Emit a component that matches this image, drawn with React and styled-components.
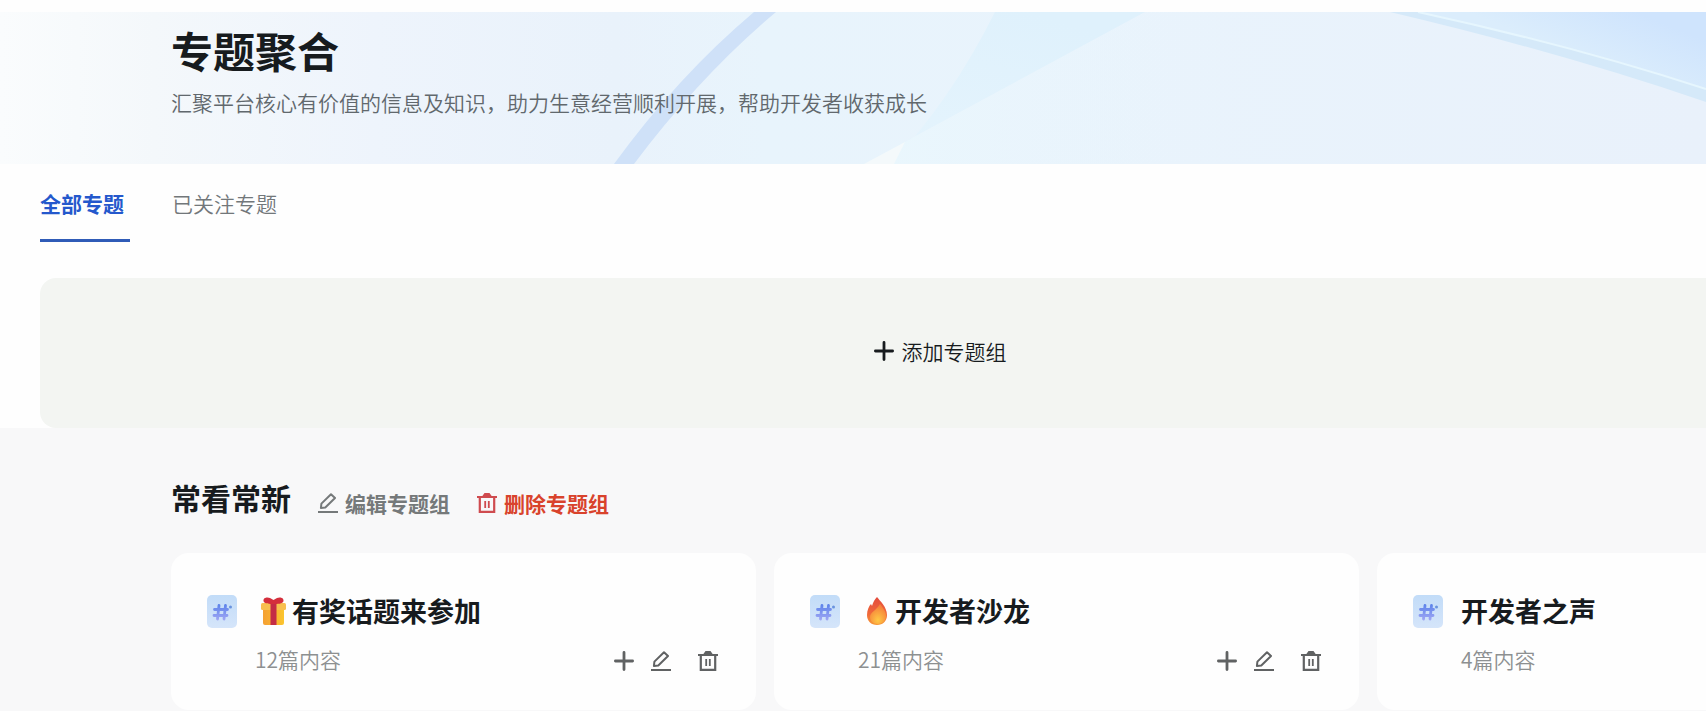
import React from 'react'
import styled, { createGlobalStyle } from 'styled-components';

const GlobalStyle = createGlobalStyle`
    * {
        box-sizing: border-box;
    }

    body {
        margin: 0;
        overflow: hidden;
        background-color: #fefefe;
        color: #171b1e;
        font-family: "Noto Sans CJK SC", "Noto Sans", sans-serif;
        font-size: 21px;
        font-weight: 350;
        line-height: 32px;
    }

    h1, h2, h3, p {
        margin: 0;
    }

    button {
        padding: 0;
        border: 0;
        background: none;
        color: inherit;
        font: inherit;
        cursor: pointer;
    }

    svg {
        display: block;
        flex-shrink: 0;
    }
`

const Page = styled.div`
    display: flex;
    flex-direction: column;
    min-height: 100vh;
    overflow: hidden;
    padding-top: 12px;
`

const Banner = styled.header`
    display: grid;
    height: 152px;

    > * {
        grid-area: 1 / 1;
    }
`

const BannerText = styled.div`
    z-index: 1;
    padding: 8px 0 0 171px;

    h1 {
        font-size: 42px;
        font-weight: 700;
        line-height: 60px;
    }

    p {
        margin-top: 6px;
        color: #61686d;
    }
`

const Tabs = styled.nav`
    display: flex;
    gap: 42px;
    padding: 23px 40px 0;
`

const Tab = styled.a`
    width: ${({ $active }) => $active ? '90px' : 'auto'};
    height: 55px;
    border-bottom: 3px solid ${({ $active }) => $active ? '#2f5bb7' : 'transparent'};
    color: ${({ $active }) => $active ? '#2458cc' : '#72777a'};
    font-weight: ${({ $active }) => $active ? 700 : 350};
    text-decoration: none;
    white-space: nowrap;
`

//runs past the right edge, like the row of cards below it
const AddGroup = styled.button`
    && {
        display: flex;
        justify-content: center;
        align-items: center;
        gap: 8px;
        height: 150px;
        margin: 36px -134px 0 40px;
        padding-bottom: 4px;
        border-radius: 16px;
        background-color: #f3f5f2;
    }
`

const Group = styled.section`
    flex-grow: 1;
    padding: 47px 0 0 171px;
    background-color: #f8f8f9;
`

const GroupHeader = styled.div`
    display: flex;
    align-items: flex-start;
    gap: 27px;

    h2 {
        font-size: 30px;
        font-weight: 700;
        line-height: 44px;
    }
`

const GroupAction = styled.button`
    && {
        display: flex;
        align-items: center;
        gap: 7px;
        padding-top: 12px;
        color: ${({ $danger }) => $danger ? '#d9432c' : '#75797a'};
        font-weight: 700;
    }

    svg {
        color: ${({ $danger }) => $danger ? '#cf4b4f' : 'inherit'};
    }
`

const Cards = styled.div`
    display: grid;
    grid-template-columns: repeat(3, 585px);
    gap: 18px;
    margin-top: 34px;
`

const Card = styled.article`
    display: flex;
    align-items: flex-start;
    gap: 18px;
    height: 157px;
    padding: 38px 38px 0 36px;
    border-radius: 18px;
    background-color: #fefefe;

    > svg {
        margin-top: 4px;
    }
`

const CardBody = styled.div`
    flex-grow: 1;
`

const CardTitle = styled.h3`
    display: flex;
    align-items: center;
    gap: 6px;
    font-size: 27px;
    font-weight: 700;
    line-height: 40px;

    svg {
        margin-left: 6px;
    }
`

const CardFooter = styled.div`
    display: flex;
    align-items: center;
    margin-top: 16px;

    p {
        flex-grow: 1;
        margin-top: -4px;
        color: #8d9091;
    }
`

const CardActions = styled.div`
    display: flex;
    gap: 17px;
    color: #606263;

    button:last-child {
        margin-left: 10px;
    }
`

const BannerArt = () => (
    <svg width='100%' height='152' viewBox='0 0 1706 152' preserveAspectRatio='none' aria-hidden='true'>
        <defs>
            <linearGradient id='sky'>
                <stop offset='0' stopColor='#fafcfd' />
                <stop offset='0.09' stopColor='#f4f8fb' />
                <stop offset='0.22' stopColor='#eef4fc' />
                <stop offset='0.36' stopColor='#e9f2fb' />
                <stop offset='0.45' stopColor='#e8f4fc' />
                <stop offset='0.7' stopColor='#e9f3fc' />
                <stop offset='1' stopColor='#e9f1fb' />
            </linearGradient>
            <linearGradient id='corner' gradientUnits='userSpaceOnUse' x1='1540' y1='40' x2='1575' y2='-45'>
                <stop offset='0.1' stopColor='#dbedfc' />
                <stop offset='0.8' stopColor='#cfe4fd' />
            </linearGradient>
            <linearGradient id='wedge' x1='0' y1='1' x2='0.6' y2='0'>
                <stop offset='0' stopColor='#e5f4fd' />
                <stop offset='1' stopColor='#dff1fc' />
            </linearGradient>
            <linearGradient id='pane'>
                <stop offset='0' stopColor='#eaf7fd' />
                <stop offset='0.5' stopColor='#e9f3fc' stopOpacity='0' />
            </linearGradient>
        </defs>
        <path d='M0 0H1706V152H0z' fill='url(#sky)' />
        <path d='M754 0Q678 64 614 152H634Q700 64 776 0z' fill='#cfe1f8' />
        <path d='M995 0H1145L864 152H890Q950 90 995 0z' fill='url(#wedge)' />
        <path d='M1145 0L864 152H1706V0z' fill='url(#pane)' />
        <path d='M864 152L905 130L894 152z' fill='#f4f9fb' />
        <path d='M1418 0Q1570 33 1706 77V0z' fill='url(#corner)' />
        <path d='M1390 0H1418Q1570 33 1706 77V90Q1560 40 1390 0z' fill='#d5e9f9' />
        <path d='M1418 0Q1570 33 1706 77' fill='none' stroke='#e6f6fe' strokeWidth='2' />
    </svg>
)

const PlusIcon = () => (
    <svg width='20' height='20' viewBox='0 0 20 20' fill='none' stroke='currentColor' strokeWidth='2.8' strokeLinecap='round'>
        <path d='M10 1.4V18.6M1.4 10H18.6' />
    </svg>
)

const EditIcon = () => (
    <svg width='20' height='20' viewBox='0 0 20 20' fill='none' stroke='currentColor' strokeWidth='2'>
        <path d='M0 19H20' />
        <path d='M2.9 15L3.4 10.6L13 1.2L17 5L7.3 14.5z' strokeLinejoin='round' />
    </svg>
)

const TrashIcon = () => (
    <svg width='20' height='20' viewBox='0 0 20 20' fill='none' stroke='currentColor' strokeWidth='2.2'>
        <path d='M0 4H20M2.8 4V18.9H17.2V4' />
        <path d='M8.2 8V15M11.8 8V15' strokeWidth='1.8' />
        <path d='M5 3.5L7.5 0H12.5L15 3.5z' fill='currentColor' stroke='none' />
    </svg>
)

const TopicIcon = () => (
    <svg width='30' height='33' viewBox='0 0 30 33' aria-hidden='true'>
        <defs>
            <linearGradient id='tile' x1='0' y1='0' x2='0' y2='1'>
                <stop offset='0' stopColor='#c2dcf8' />
                <stop offset='1' stopColor='#d5e5fa' />
            </linearGradient>
            <linearGradient id='hash' gradientUnits='userSpaceOnUse' x1='0' y1='9' x2='0' y2='25'>
                <stop offset='0' stopColor='#5b82ea' />
                <stop offset='1' stopColor='#9fa6f4' />
            </linearGradient>
        </defs>
        <rect width='30' height='33' rx='5' fill='url(#tile)' />
        <path d='M12 10.5L10.5 24M18.5 10.5L17 24M7.5 14.5H20.5M7 20.5H20' fill='none' stroke='url(#hash)' strokeWidth='2.8' strokeLinecap='round' />
        <circle cx='23.5' cy='12' r='1.5' fill='#6993de' />
    </svg>
)

const GiftIcon = () => (
    <svg width='25' height='28' viewBox='0 0 25 28' aria-hidden='true'>
        <defs>
            <linearGradient id='box' x1='0' y1='0' x2='1' y2='0'>
                <stop offset='0' stopColor='#f5a033' />
                <stop offset='1' stopColor='#fbc52e' />
            </linearGradient>
        </defs>
        <path d='M2 10H23V26Q23 28 21 28H4Q2 28 2 26z' fill='url(#box)' />
        <rect x='0' y='6' width='25' height='7' rx='1.5' fill='#f8bf4f' />
        <path d='M9.5 6H15.5V28H9.5z' fill='#c42c45' />
        <path d='M12.5 7C9 7 3 7 2.5 4C2 0 7 0 9 1L12.5 3L16 1C18 0 23 0 22.5 4C22 7 16 7 12.5 7z' fill='#d42f3c' />
    </svg>
)

const FireIcon = () => (
    <svg width='25' height='28' viewBox='-2 0 25 28' aria-hidden='true'>
        <defs>
            <linearGradient id='flame' x1='0' y1='0' x2='0' y2='1'>
                <stop offset='0' stopColor='#e34b3c' />
                <stop offset='0.6' stopColor='#f0683a' />
                <stop offset='1' stopColor='#f79a35' />
            </linearGradient>
            <radialGradient id='ember' cx='0.5' cy='0.8' r='0.7'>
                <stop offset='0' stopColor='#ffc845' />
                <stop offset='1' stopColor='#f5803a' />
            </radialGradient>
        </defs>
        <path d='M11 0C14 4 21 10 21 18C21 24 17 28 11 28C5 28 1 24 1 18C1 13 3 9 5 7L6 9C7 5 9 2 11 0z' fill='url(#flame)' />
        <path d='M14 7C18 12 20 15 20 19C20 24 16 27 12 27C7 27 4 24 4 20C4 15 11 13 14 7z' fill='url(#ember)' />
    </svg>
)

const topics = [
    { title: '有奖话题来参加', count: 12, icon: <GiftIcon /> },
    { title: '开发者沙龙', count: 21, icon: <FireIcon /> },
    { title: '开发者之声', count: 4 },
]

const TopicCard = ({ title, count, icon }) => (
    <Card>
        <TopicIcon />
        <CardBody>
            <CardTitle>{icon}{title}</CardTitle>
            <CardFooter>
                <p>{count}篇内容</p>
                <CardActions>
                    <button aria-label='添加'><PlusIcon /></button>
                    <button aria-label='编辑'><EditIcon /></button>
                    <button aria-label='删除'><TrashIcon /></button>
                </CardActions>
            </CardFooter>
        </CardBody>
    </Card>
)

const App = () => {
    return (
        <>
            <GlobalStyle />
            <Page>
                <Banner>
                    <BannerArt />
                    <BannerText>
                        <h1>专题聚合</h1>
                        <p>汇聚平台核心有价值的信息及知识，助力生意经营顺利开展，帮助开发者收获成长</p>
                    </BannerText>
                </Banner>
                <Tabs>
                    <Tab href='#all' $active>全部专题</Tab>
                    <Tab href='#followed'>已关注专题</Tab>
                </Tabs>
                <AddGroup><PlusIcon />添加专题组</AddGroup>
                <Group>
                    <GroupHeader>
                        <h2>常看常新</h2>
                        <GroupAction><EditIcon />编辑专题组</GroupAction>
                        <GroupAction $danger><TrashIcon />删除专题组</GroupAction>
                    </GroupHeader>
                    <Cards>
                        {topics.map((topic) => <TopicCard key={topic.title} {...topic} />)}
                    </Cards>
                </Group>
            </Page>
        </>
    )
}

export default App
